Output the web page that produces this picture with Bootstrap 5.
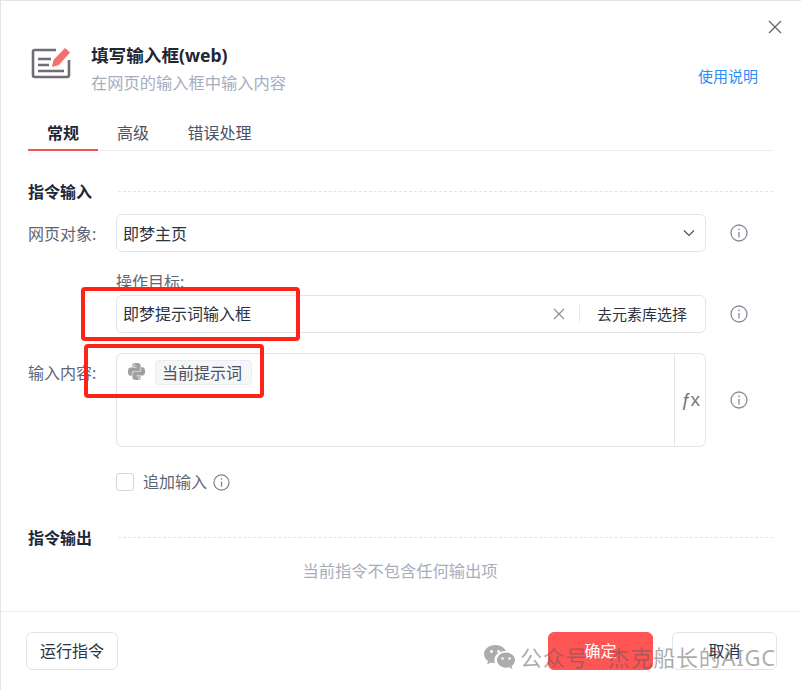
<!DOCTYPE html>
<html lang="zh">
<head>
<meta charset="utf-8">
<title>填写输入框(web)</title>
<link href="https://cdn.jsdelivr.net/npm/bootstrap@5.3.0/dist/css/bootstrap.min.css" rel="stylesheet">
<style>
html,body{height:100%;overflow:hidden}
body{font-family:"Noto Sans","Noto Sans CJK SC",sans-serif;font-size:16px;color:#2b3240;background:#fff}
.frame{position:relative;width:801px;height:690px;border-top:1px solid #e4e5ea;border-left:1px solid #e4e5ea;display:flex;flex-direction:column}
.close-x{position:absolute;left:767px;top:19px;width:14px;height:14px;color:#666}
.main-area{flex:1;padding:0 28px 0 27px;min-height:0}
.head-row{height:62px;margin-top:39px;display:flex;align-items:flex-start}
.head-icon{width:40px;height:33px;margin:7px 19px 0 3px;flex:none}
.head-title{font-size:17.6px;font-weight:700;line-height:30px;color:#1f2635;margin-bottom:0;padding-left:1px}
.head-sub{font-size:16.25px;line-height:26px;color:#a6adbd;margin-top:0;padding-left:1px}
.help-link{margin-left:auto;margin-right:15px;margin-top:26px;font-size:15px;line-height:20px;color:#2f8cf5;text-decoration:none}
.tab-bar{height:49px;margin-top:0;border-bottom:1px solid #ecedf3;flex-wrap:nowrap;padding-top:16px}
.tab-bar .nav-link{height:33px;padding:0;border:0;border-radius:0;background:none;color:#4b5262;font-size:16px;line-height:31px;text-align:center;margin-bottom:-1px}
.tab-bar .tab-a{width:70px;color:#1f2635;font-weight:700;border-bottom:2px solid #f55353}
.tab-bar .tab-b{width:70px}
.tab-bar .tab-c{width:103px}
.sec-head{display:flex;align-items:center;font-size:16px;font-weight:700;color:#1f2635;line-height:22px}
.sec-head span{width:90px;flex:none}
.sec-head i{flex:1;border-top:1px dashed #e3e4e8;margin-top:-2px}
.sec-in{margin-top:30px}
.sec-out{margin-top:36px}
.row-first{margin-top:11px}
.field-row{display:flex;align-items:flex-start}
.f-label{width:88px;height:38px;flex:none;font-size:16px;line-height:40px;color:#5f6675;white-space:nowrap}
.f-box{width:590px;flex:none}
.f-info{margin-left:24px;width:18px;height:18px;margin-top:10px;flex:none;color:#868c98}
.f-sel.form-select{height:38px;padding:1px 30px 0 6px;font-size:16px;line-height:36px;color:#2b3240;border:1px solid #e4e5ea;border-radius:6px;background-image:none;box-shadow:none}
.sel-wrap{position:relative}
.sel-caret{position:absolute;right:11px;top:15px;width:12px;height:8px;color:#4a5261}
.tgt-box{height:38px;display:flex;align-items:center;border:1px solid #e4e5ea;border-radius:6px;background:#fff}
.tgt-val{flex:1;padding-left:6px;font-size:16px;color:#2b3240}
.tgt-x{width:12px;height:12px;color:#8a909c;margin-right:14px}
.tgt-sep{width:1px;height:18px;background:#e8e9ed}
.tgt-btn{width:125px;text-align:center;font-size:15px;color:#2b3240;padding-right:1px}
.tgt-cap{font-size:16px;line-height:20px;color:#5f6675;margin:20px 0 0 88px;height:23px}
.content-box{height:94px;display:flex;border:1px solid #e4e5ea;border-radius:6px}
.content-main{flex:1;display:flex;align-items:flex-start;padding:6px 0 0 11px}
.py-ico{width:17px;height:17px;color:#a0a0a0;margin:3px 10px 0 0}
.var-chip{height:25px;padding:0 6px;font-size:16px;line-height:24px;color:#4a5160;background:#f5f6f8;border:1px solid #ebecef;border-radius:4px;width:97px;white-space:nowrap}
.fx-col{width:31px;border-left:1px solid #e4e5ea;display:flex;align-items:center;justify-content:center;font-family:"Liberation Sans",sans-serif;font-size:19px;letter-spacing:-1px;color:#777}
.row-in-content{margin-top:20px}
.row-in-content .f-info{margin-top:38px}
.chk-row{display:flex;align-items:center;margin:26px 0 0 88px;height:18px;font-size:16px;color:#5f6675}
.chk-row .form-check-input{width:18px;height:18px;margin:0 9px 0 0;border:1px solid #d5d7dd;border-radius:3px;flex:none}
.chk-ico{width:17px;height:17px;margin-left:6px;color:#7e8592}
.empty-tip{margin-top:10px;line-height:24px;font-size:16.25px;text-align:center;color:#a6adbd;padding-right:1px}
.foot-bar{height:79px;border-top:1px solid #ecedf3;padding:20px 24px 0 25px;display:flex;align-items:flex-start;flex:none}
.foot-bar .btn{height:38px;font-size:16px;line-height:36px;padding:0;border-radius:6px;border:1px solid #e4e5ea;color:#2b3240;background:#fff}
.btn-run{width:92px}
.foot-bar .btn-ok{width:105px;margin-left:auto;background:#ff5555;border-color:#ff5555;color:#fff}
.foot-bar .btn-no{width:105px;margin-left:19px}
.mark-box{position:absolute;border:4px solid #ff2418;border-radius:4px;pointer-events:none}
.mark-1{left:80px;top:286px;width:219px;height:54px}
.mark-2{left:83px;top:343px;width:180px;height:54px}
.wm{position:absolute;left:483px;top:642px;display:flex;align-items:center;color:rgba(90,90,90,.5);font-size:22px;line-height:28px;letter-spacing:.75px;white-space:nowrap;pointer-events:none}
.wm svg{width:31px;height:26px;margin-right:5px}
</style>
</head>
<body>
<div class="frame">
  <svg class="close-x" viewBox="0 0 14 14" fill="none" stroke="currentColor" stroke-width="1.3"><path d="M1 1l12 12M13 1L1 13"/></svg>
  <div class="main-area">
    <div class="head-row">
      <svg class="head-icon" viewBox="0 0 40 33" fill="none">
        <path d="M25 3H4a2 2 0 0 0-2 2v23a2 2 0 0 0 2 2h32a2 2 0 0 0 2-2V13" stroke="#6e6e78" stroke-width="2.600"/>
        <path d="M7 12h13M7 18h11M7 24h26" stroke="#6e6e78" stroke-width="2.400"/>
        <path d="M21 20l1.500-7L34 1l5 4.500L28 18z" fill="#f66f6f"/>
      </svg>
      <div>
        <h1 class="head-title">填写输入框(web)</h1>
        <div class="head-sub">在网页的输入框中输入内容</div>
      </div>
      <a class="help-link" href="#">使用说明</a>
    </div>
    <nav class="nav tab-bar">
      <a class="nav-link tab-a" href="#">常规</a>
      <a class="nav-link tab-b" href="#">高级</a>
      <a class="nav-link tab-c" href="#">错误处理</a>
    </nav>
    <div class="sec-head sec-in"><span>指令输入</span><i></i></div>
    <div class="field-row row-first">
      <div class="f-label">网页对象:</div>
      <div class="f-box sel-wrap">
        <select class="form-select f-sel"><option>即梦主页</option></select>
        <svg class="sel-caret" viewBox="0 0 12 8" fill="none" stroke="currentColor" stroke-width="1.2"><path d="M1 1.500l5 5 5-5"/></svg>
      </div>
      <svg class="f-info" viewBox="0 0 18 18" fill="none" stroke="currentColor" stroke-width="1.3"><circle cx="9" cy="9" r="8"/><path d="M9 8v5.500M9 4.600v1.600"/></svg>
    </div>
    <div class="tgt-cap">操作目标:</div>
    <div class="field-row">
      <div class="f-label"></div>
      <div class="f-box tgt-box">
        <div class="tgt-val">即梦提示词输入框</div>
        <svg class="tgt-x" viewBox="0 0 12 12" fill="none" stroke="currentColor" stroke-width="1.2"><path d="M1 1l10 10M11 1L1 11"/></svg>
        <div class="tgt-sep"></div>
        <div class="tgt-btn">去元素库选择</div>
      </div>
      <svg class="f-info" viewBox="0 0 18 18" fill="none" stroke="currentColor" stroke-width="1.3"><circle cx="9" cy="9" r="8"/><path d="M9 8v5.500M9 4.600v1.600"/></svg>
    </div>
    <div class="field-row row-in-content">
      <div class="f-label">输入内容:</div>
      <div class="f-box content-box">
        <div class="content-main">
          <svg class="py-ico" viewBox="0 0 24 24" fill="currentColor"><path d="M14.25.18l.9.2.73.26.59.3.45.32.34.34.25.34.16.33.1.3.04.26.02.2-.01.13V8.5l-.05.63-.13.55-.21.46-.26.38-.3.31-.33.25-.35.19-.35.14-.33.1-.3.07-.26.04-.21.02H8.77l-.69.05-.59.14-.5.22-.41.27-.33.32-.27.35-.2.36-.15.37-.1.35-.07.32-.04.27-.02.21v3.06H3.17l-.21-.03-.28-.07-.32-.12-.35-.18-.36-.26-.36-.36-.35-.46-.32-.59-.28-.73-.21-.88-.14-1.05-.05-1.23.06-1.22.16-1.04.24-.87.32-.71.36-.57.4-.44.42-.33.42-.24.4-.16.36-.1.32-.05.24-.01h.16l.06.01h8.16v-.83H6.18l-.01-2.75-.02-.37.05-.34.11-.31.17-.28.25-.26.31-.23.38-.2.44-.18.51-.15.58-.12.64-.1.71-.06.77-.04.84-.02 1.27.05zm-6.3 1.98l-.23.33-.08.41.08.41.23.34.33.22.41.09.41-.09.33-.22.23-.34.08-.41-.08-.41-.23-.33-.33-.22-.41-.09-.41.09zm13.09 3.95l.28.06.32.12.35.18.36.27.36.35.35.47.32.59.28.73.21.88.14 1.04.05 1.23-.06 1.23-.16 1.04-.24.86-.32.71-.36.57-.4.45-.42.33-.42.24-.4.16-.36.09-.32.05-.24.02-.16-.01h-8.22v.82h5.84l.01 2.76.02.36-.05.34-.11.31-.17.29-.25.25-.31.24-.38.2-.44.17-.51.15-.58.13-.64.09-.71.07-.77.04-.84.01-1.27-.04-1.07-.14-.9-.2-.73-.25-.59-.3-.45-.33-.34-.34-.25-.34-.16-.33-.1-.3-.04-.25-.02-.2.01-.13v-5.34l.05-.64.13-.54.21-.46.26-.38.3-.32.33-.24.35-.2.35-.14.33-.1.3-.06.26-.04.21-.02.13-.01h5.84l.69-.05.59-.14.5-.21.41-.28.33-.32.27-.35.2-.36.15-.36.1-.35.07-.32.04-.28.02-.21V6.07h2.09l.14.01zm-6.47 14.25l-.23.33-.08.41.08.41.23.33.33.23.41.08.41-.08.33-.23.23-.33.08-.41-.08-.41-.23-.33-.33-.23-.41-.08-.41.08z"/></svg>
          <div class="var-chip">当前提示词</div>
        </div>
        <div class="fx-col">ƒx</div>
      </div>
      <svg class="f-info" viewBox="0 0 18 18" fill="none" stroke="currentColor" stroke-width="1.3"><circle cx="9" cy="9" r="8"/><path d="M9 8v5.500M9 4.600v1.600"/></svg>
    </div>
    <div class="chk-row">
      <input class="form-check-input" type="checkbox" id="append">
      <label for="append">追加输入</label>
      <svg class="chk-ico" viewBox="0 0 18 18" fill="none" stroke="currentColor" stroke-width="1.3"><circle cx="9" cy="9" r="8"/><path d="M9 8v5.500M9 4.600v1.600"/></svg>
    </div>
    <div class="sec-head sec-out"><span>指令输出</span><i></i></div>
    <div class="empty-tip">当前指令不包含任何输出项</div>
  </div>
  <div class="foot-bar">
    <button class="btn btn-run" type="button">运行指令</button>
    <button class="btn btn-ok" type="button">确定</button>
    <button class="btn btn-no" type="button">取消</button>
  </div>
  <div class="mark-box mark-1"></div>
  <div class="mark-box mark-2"></div>
  <div class="wm">
    <svg viewBox="0 0 31 26" fill="currentColor">
      <path d="M11 1C5 1 0 5 0 10c0 3 1.600 5.400 4 7l-1 3.500 4-2c1.300.4 2.600.6 4 .6-.4-1-.6-2-.6-3 0-5 4.600-9 10.600-9h.8C20.700 3.600 16.200 1 11 1z"/>
      <path d="M22 8.500c-5 0-9 3.400-9 7.600s4 7.600 9 7.600c1 0 2-.2 3-.4l3.500 2-1-3c2.100-1.400 3.500-3.700 3.500-6.200 0-4.200-4-7.600-9-7.600z"/>
      <circle cx="7.500" cy="7.500" r="1.400" fill="#fff"/><circle cx="14.500" cy="7.500" r="1.400" fill="#fff"/>
      <circle cx="18.500" cy="14.500" r="1.200" fill="#fff"/><circle cx="25.500" cy="14.500" r="1.200" fill="#fff"/>
    </svg>
    <span>公众号 · 杰克船长的AIGC</span>
  </div>
</div>
<script src="https://cdn.jsdelivr.net/npm/bootstrap@5.3.0/dist/js/bootstrap.bundle.min.js"></script>
</body>
</html>
